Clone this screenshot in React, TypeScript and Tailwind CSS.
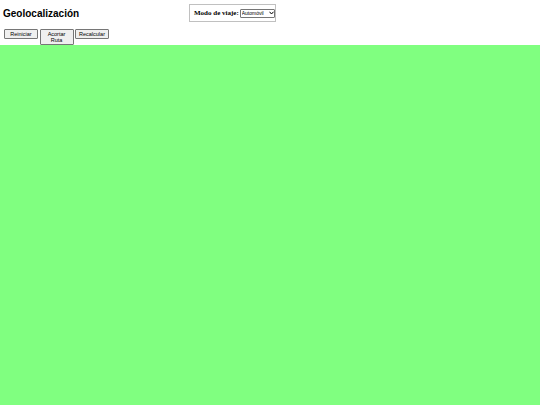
import React from "react";

export default function App() {
  const btn =
    "w-[34px] bg-[#efefef] border border-[#767676] rounded-[1px] text-[5.5px] leading-[6px] text-black py-[1px] text-center";
  return (
    <div className="flex flex-col h-[405px] w-[540px] bg-white overflow-hidden" style={{ fontFamily: '"Liberation Sans", Arial, sans-serif' }}>
      <div className="flex items-start h-[29px]">
        <h1 className="ml-[3px] mt-[7px] w-[186px] text-[10px] leading-[13px] font-bold text-black">Geolocalización</h1>
        <fieldset className="mt-[4px] w-[86px] h-[18px] border border-[#c0c0c0] flex items-center pl-[4px] gap-[1px] whitespace-nowrap">
          <span className="shrink-0 text-[7px] leading-[9px] font-bold text-black" style={{ fontFamily: '"Liberation Serif", "Times New Roman", serif' }}>
            Modo de viaje:
          </span>
          <span className="relative shrink-0 flex">
            <select className="appearance-none h-[9px] w-[35px] text-[5px] leading-[7px] border border-[#767676] rounded-[1px] bg-white pl-[1px] pr-[6px] text-black">
              <option>Automóvil</option>
            </select>
            <svg className="absolute right-[1px] top-[2.5px] pointer-events-none" width="5" height="4" viewBox="0 0 10 8">
              <path d="M1 1.5 L5 6 L9 1.5" fill="none" stroke="#000" strokeWidth="2" />
            </svg>
          </span>
        </fieldset>
      </div>
      <div className="flex items-start gap-[1.5px] pl-[4px] h-[16px]">
        <button className={btn}>Reiniciar</button>
        <button className={btn}>
          Acortar
          <br />
          Ruta
        </button>
        <button className={btn}>Recalcular</button>
      </div>
      <div className="flex-1 bg-[#80ff80]" />
    </div>
  );
}
